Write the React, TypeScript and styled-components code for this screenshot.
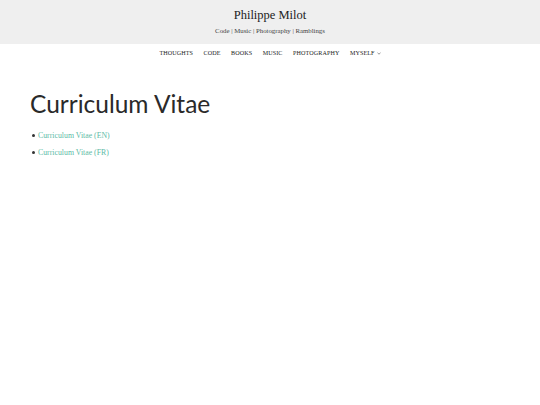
import React from "react";
import styled, { createGlobalStyle } from "styled-components";

const Global = createGlobalStyle`
  html, body { margin: 0; padding: 0; background: #ffffff; }
  body { font-family: "Liberation Serif", "DejaVu Serif", serif; color: #333; }
`;

const Header = styled.header`
  background: #efefef;
  height: 44px;
  display: flex;
  flex-direction: column;
  align-items: center;
  padding-top: 8px;
  box-sizing: border-box;
`;

const SiteTitle = styled.div`
  font-family: "Liberation Serif", serif;
  font-size: 12.5px;
  line-height: 15px;
  color: #222;
`;

const Tagline = styled.div`
  margin-top: 4px;
  font-size: 6.8px;
  line-height: 8px;
  color: #444;
`;

const Nav = styled.nav`
  display: flex;
  justify-content: center;
  gap: 10.5px;
  height: 18px;
  align-items: center;
`;

const NavItem = styled.a`
  font-family: "Liberation Serif", serif;
  font-size: 6.1px;
  color: #222;
  text-transform: uppercase;
  text-decoration: none;
  letter-spacing: 0.1px;
  display: inline-flex;
  align-items: center;
`;

const Caret = styled.svg`
  width: 4px;
  height: 3px;
  margin-left: 2px;
`;

const Main = styled.main`
  padding: 26px 30px;
`;

const Title = styled.h1`
  margin: 0;
  font-family: "Lato", "Open Sans", sans-serif;
  font-weight: 400;
  font-size: 24.5px;
  line-height: 32px;
  color: #2a2a2a;
`;

const List = styled.ul`
  margin: 7px 0 0;
  padding: 0;
  list-style: none;
`;

const Item = styled.li`
  display: flex;
  align-items: center;
  font-size: 7.8px;
  line-height: 17px;
  color: #333;
  &::before {
    content: "";
    width: 3px;
    height: 3px;
    border-radius: 50%;
    background: #333;
    margin: 0 3px 0 2px;
  }
`;

const Link = styled.a`
  color: #5dbba6;
  text-decoration: none;
`;

export default function App() {
  return (
    <>
      <Global />
      <Header>
        <SiteTitle>Philippe Milot</SiteTitle>
        <Tagline>Code | Music | Photography | Ramblings</Tagline>
      </Header>
      <Nav>
        <NavItem>Thoughts</NavItem>
        <NavItem>Code</NavItem>
        <NavItem>Books</NavItem>
        <NavItem>Music</NavItem>
        <NavItem>Photography</NavItem>
        <NavItem>
          Myself
          <Caret viewBox="0 0 4 3">
            <path d="M0.5 0.8 L2 2.2 L3.5 0.8" stroke="#666" strokeWidth="0.7" fill="none" />
          </Caret>
        </NavItem>
      </Nav>
      <Main>
        <Title>Curriculum Vitae</Title>
        <List>
          <Item><Link>Curriculum Vitae (EN)</Link></Item>
          <Item><Link>Curriculum Vitae (FR)</Link></Item>
        </List>
      </Main>
    </>
  );
}
